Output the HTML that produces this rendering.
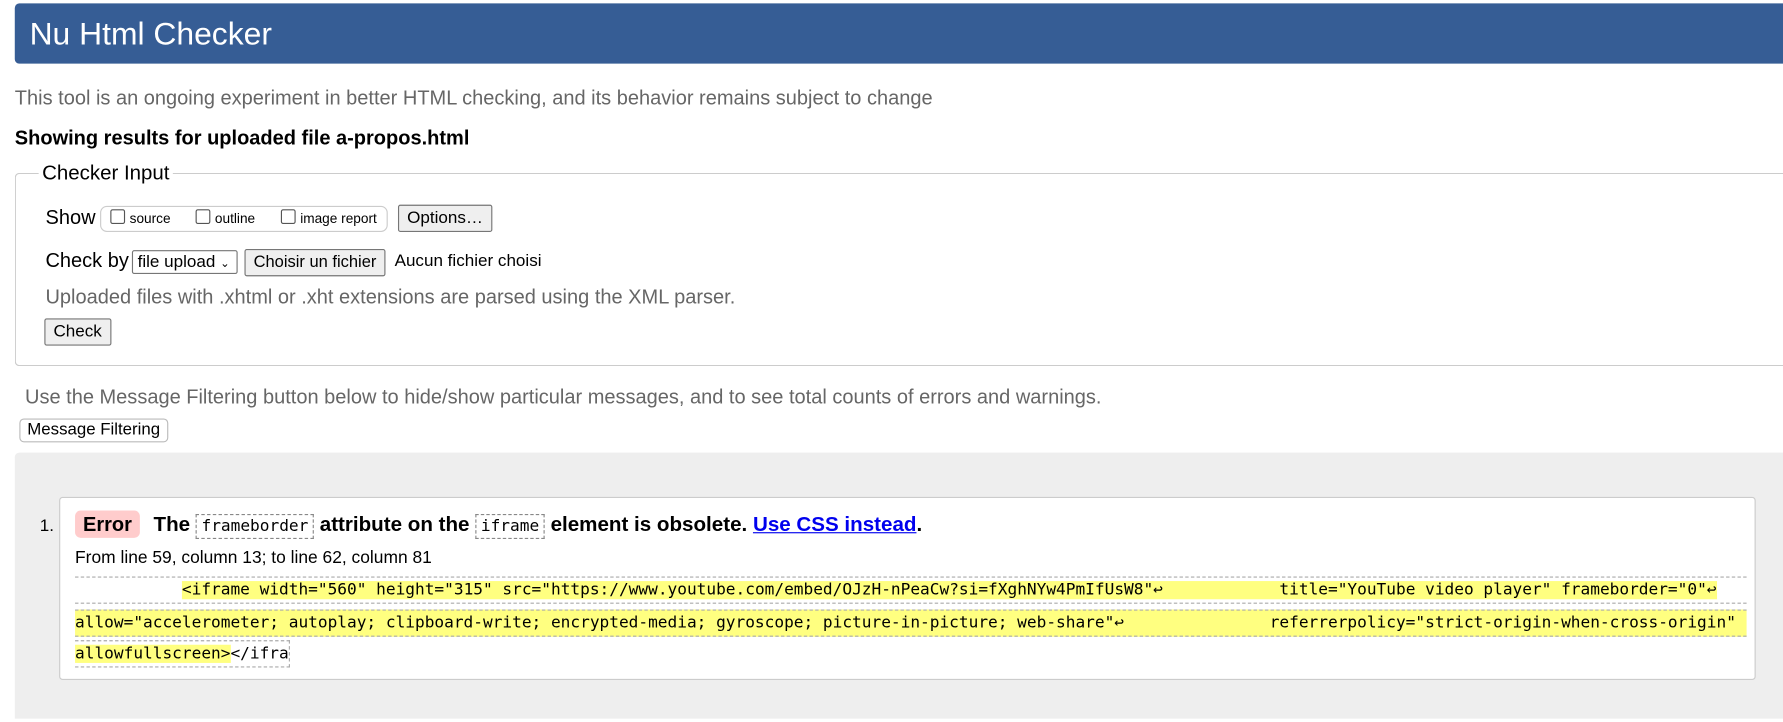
<!DOCTYPE html>
<html><head><meta charset="utf-8"><style>
body{margin:0;width:1783px;height:722px;background:#fff;font-family:"Liberation Sans",Arial,sans-serif;position:relative;overflow:hidden;color:#000}
#w{position:absolute;left:0;top:0;width:1568px;height:635px;transform:scale(1.1371);transform-origin:0 0}
.a{position:absolute;white-space:nowrap}
.hdr{left:13px;top:3px;width:1560px;height:53px;background:#365d95;border-radius:4px 0 0 4px;color:#fff;font-size:28px}
.btn{position:absolute;background:#efefef;border:1px solid #767676;border-radius:2px;font-size:15px;padding:0 7px;line-height:21px}
.cb{display:inline-block;width:11px;height:11px;border:1px solid #555;border-radius:2px;vertical-align:-1px;margin-right:4px}
.mono{font-family:"DejaVu Sans Mono","Liberation Mono",monospace;font-size:14.2px}
.code{position:absolute;left:66px;height:22px;line-height:22px;border-top:1px dashed #aaa;border-bottom:1px dashed #aaa;white-space:pre}
.y{background:#ffff80}
.cd{border:1px dashed #888;padding:2px 4px}
</style></head><body><div id="w">
<div class="a hdr"><span style="position:absolute;left:13px;top:11px">Nu Html Checker</span></div>
<div class="a" style="left:13px;top:76px;font-size:17.6px;color:#666">This tool is an ongoing experiment in better HTML checking, and its behavior remains subject to change</div>
<div class="a" style="left:13px;top:111px;font-size:17.6px;font-weight:bold">Showing results for uploaded file a-propos.html</div>
<div class="a" style="left:13px;top:152px;width:1560px;height:168px;border:1px solid #ccc;border-right:none;border-radius:4px 0 0 4px"></div>
<div class="a" style="left:34px;top:142px;background:#fff;padding:0 3px;font-size:18px">Checker Input</div>
<div class="a" style="left:40px;top:181px;font-size:17.6px">Show</div>
<div class="a" style="left:88px;top:181px;width:251px;height:21px;border:1px solid #ccc;border-radius:6px;font-size:12px;line-height:21px"><span style="position:absolute;left:8px"><span class="cb"></span>source</span><span style="position:absolute;left:83px"><span class="cb"></span>outline</span><span style="position:absolute;left:158px"><span class="cb"></span>image report</span></div>
<div class="btn" style="left:350px;top:180px;line-height:22px">Options…</div>
<div class="a" style="left:40px;top:219px;font-size:17.6px">Check by</div>
<div class="a" style="left:116px;top:220px;width:87px;height:19px;border:1px solid #767676;border-radius:2px;font-size:15px;line-height:19px;padding-left:4px">file upload <span style="font-size:10px">⌄</span></div>
<div class="btn" style="left:215px;top:219px;line-height:22px;font-size:14.5px">Choisir un fichier</div>
<div class="a" style="left:347px;top:221px;font-size:15px">Aucun fichier choisi</div>
<div class="a" style="left:40px;top:251px;font-size:17.6px;color:#666">Uploaded files with .xhtml or .xht extensions are parsed using the XML parser.</div>
<div class="btn" style="left:39px;top:280px;line-height:22px;font-size:15px">Check</div>
<div class="a" style="left:22px;top:339px;font-size:17.6px;color:#666">Use the Message Filtering button below to hide/show particular messages, and to see total counts of errors and warnings.</div>
<div class="a" style="left:17px;top:368px;border:1px solid #bbb;border-radius:4px;font-size:14.8px;padding:0 6px;line-height:19px">Message Filtering</div>
<div class="a" style="left:13px;top:398px;width:1560px;height:234px;background:#eee;border-radius:4px 0 0 0"></div>
<div class="a" style="left:52px;top:437px;width:1490px;height:159px;background:#fff;border:1px solid #ccc;border-radius:3px"></div>
<div class="a" style="left:35px;top:454px;font-size:15px">1.</div>
<div class="a" style="left:66px;top:449px;background:#fcc;border-radius:5px;padding:0 7px;font-size:17.6px;font-weight:bold;line-height:24px">Error</div>
<div class="a" style="left:135px;top:451px;font-size:18.1px;font-weight:bold">The <span class="cd mono" style="font-weight:normal">frameborder</span> attribute on the <span class="cd mono" style="font-weight:normal">iframe</span> element is obsolete. <a style="color:#00e;text-decoration:underline">Use CSS instead</a>.</div>
<div class="a" style="left:66px;top:482px;font-size:15.3px">From line 59, column 13; to line 62, column 81</div>
<div class="code mono" style="top:507px;width:1470px">           <span class="y">&lt;iframe width="560" height="315" src="https://www.youtube.com/embed/OJzH-nPeaCw?si=fXghNYw4PmIfUsW8"↩            title="YouTube video player" frameborder="0"↩</span></div>
<div class="code mono y" style="top:536px;width:1470px">allow="accelerometer; autoplay; clipboard-write; encrypted-media; gyroscope; picture-in-picture; web-share"↩               referrerpolicy="strict-origin-when-cross-origin"</div>
<div class="code mono" style="top:563px;border-right:1px dashed #aaa"><span class="y">allowfullscreen&gt;</span>&lt;/ifra</div>
</div></body></html>
